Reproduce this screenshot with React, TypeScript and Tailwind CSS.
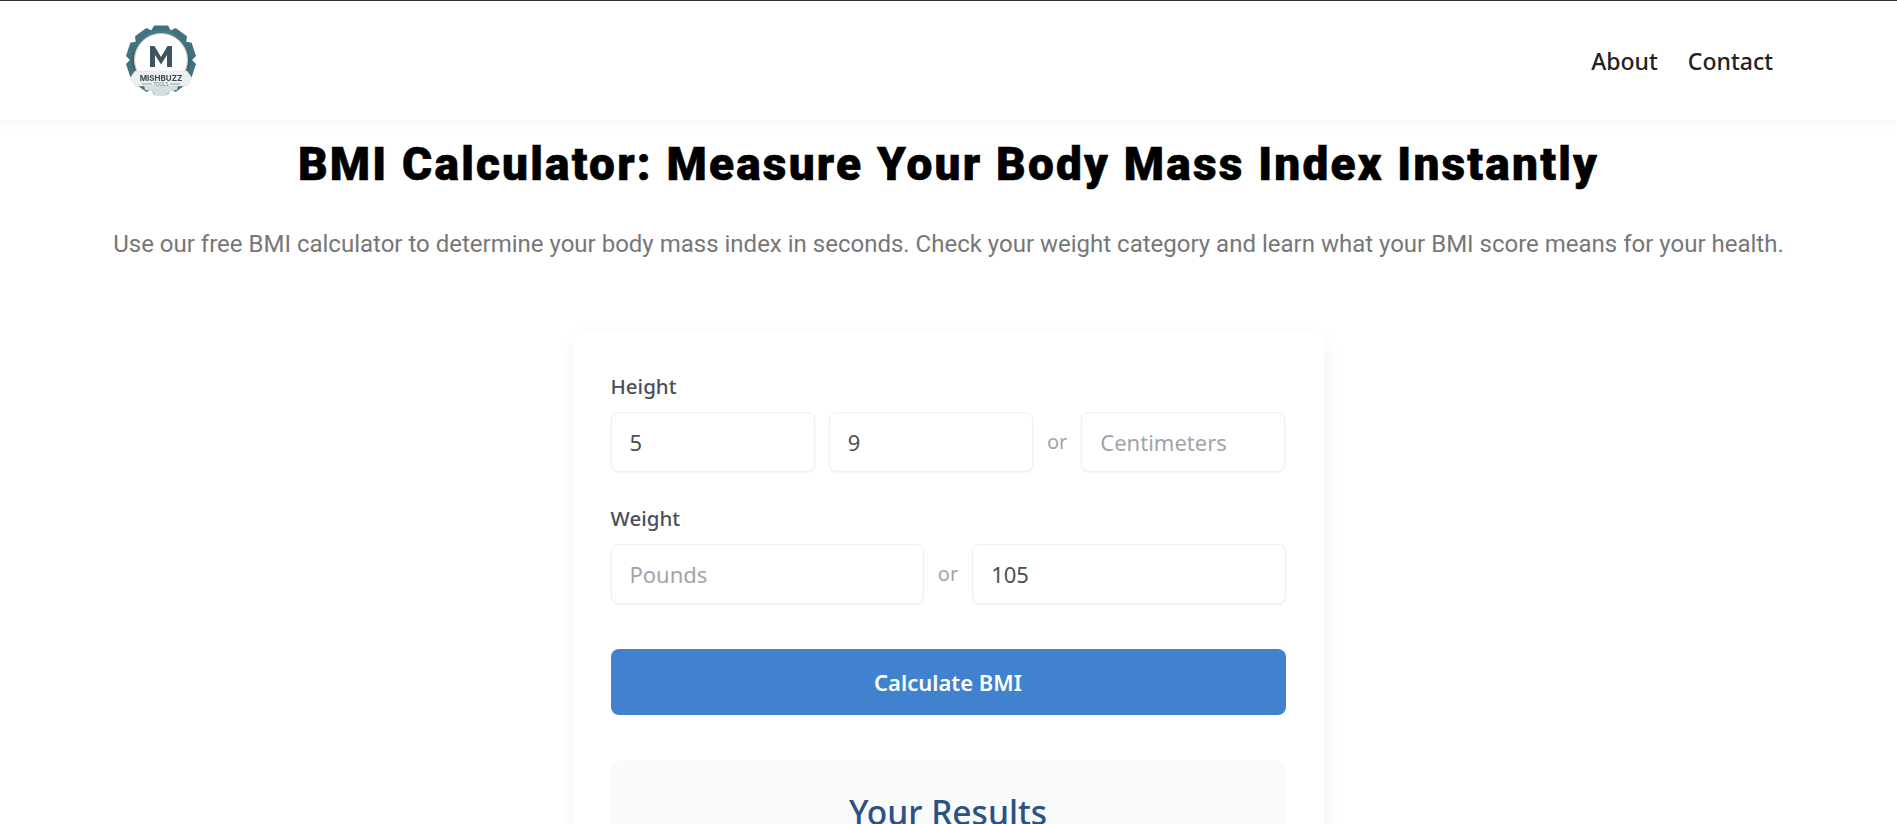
function Logo() {
  const teeth = Array.from({ length: 10 }, (_, i) => i * 36);
  return (
    <svg width="74" height="74" viewBox="0 0 74 74" aria-label="Mishbuzz Tools" className="mt-[3px] blur-[0.3px]">
      <defs>
        <linearGradient id="gear" x1="0" y1="0" x2="0" y2="1">
          <stop offset="0" stopColor="#42808f" />
          <stop offset="0.6" stopColor="#3d5f72" />
          <stop offset="1" stopColor="#5c7684" />
        </linearGradient>
      </defs>
      <circle cx="36" cy="35" r="31" fill="url(#gear)" />
      {teeth.map((a) => (
        <path key={a} d="M26 6l3-5.500h14l3 5.500z" fill="#42727f" transform={`rotate(${a} 36 35)`} />
      ))}
      <circle cx="36" cy="35" r="26.500" fill="#fff" stroke="#d9c8a8" strokeWidth="1" />
      <path d="M25 42V21h4.500L36 32l6.500-11H47v21h-5V30l-6 9.500L30 30v12z" fill="#3d5561" />
      <path d="M18 56h36l-2 9-7 1-4 5h-10l-4-5-7-1z" fill="#d6dde0" />
      <path d="M5 53l5-7h52l5 7-5 8H10z" fill="#edf0f1" stroke="#d3d9dc" strokeWidth="0.5" />
      <text x="36" y="56" textAnchor="middle" fontFamily="Inter, 'Liberation Sans', sans-serif" fontWeight="700" fontSize="8" fill="#3a4a55">MISHBUZZ</text>
      <path d="M17 59h10M45 59h10" stroke="#7d8c95" strokeWidth="0.8" />
      <text x="36" y="60.500" textAnchor="middle" fontFamily="'Liberation Sans', sans-serif" fontSize="4.500" fill="#66757e">TOOLS</text>
    </svg>
  );
}

function Field({ value, placeholder }: { value?: string; placeholder?: string }) {
  return (
    <input
      readOnly
      value={value ?? ""}
      placeholder={placeholder}
      className="h-[60px] w-full min-w-0 flex-1 rounded-lg border border-[#edf0f3] bg-white px-[18px] text-[22px] text-[#4b5057] shadow-[0_1px_2px_rgba(0,0,0,0.05)] outline-none placeholder:text-[#a0a4ab]"
    />
  );
}

function Or() {
  return <span className="text-[20px] text-[#a0a4ab]">or</span>;
}

export default function App() {
  return (
    <div className="h-[824px] overflow-hidden bg-white font-['Noto_Sans',sans-serif]">
      <header className="flex h-[120px] items-center justify-between border-t border-[#3a3230] bg-white pl-[125px] pr-[124px] shadow-[0_2px_12px_rgba(0,0,0,0.05)]">
        <Logo />
        <nav className="mt-[2px] flex gap-[30px] text-[23px] font-medium text-[#222222]">
          <a href="#about">About</a>
          <a href="#contact">Contact</a>
        </nav>
      </header>

      <main className="flex flex-col items-center">
        <h1 className="mt-[17px] font-['Roboto',sans-serif] text-[46px] leading-[54px] font-black tracking-[2.200px] text-black [-webkit-text-stroke:0.6px_black]">
          BMI Calculator: Measure Your Body Mass Index Instantly
        </h1>
        <p className="mt-[36px] font-['Roboto',sans-serif] text-[24px] leading-[34px] text-[#777777]">
          Use our free BMI calculator to determine your body mass index in seconds. Check your weight category and learn what your BMI score means for your health.
        </p>

        <section className="mt-[72px] w-[750px] rounded-xl bg-white pt-[39px] pr-[38px] pl-[37px] shadow-[0_4px_20px_rgba(0,0,0,0.06)]">
          <label className="block text-[20.500px] leading-[28px] font-medium text-[#4a4f5a]">Height</label>
          <div className="mt-[12px] flex items-center gap-[14px]">
            <Field value="5" />
            <Field value="9" />
            <Or />
            <Field placeholder="Centimeters" />
          </div>

          <label className="mt-[32px] block text-[20.500px] leading-[28px] font-medium text-[#4a4f5a]">Weight</label>
          <div className="mt-[12px] flex items-center gap-[14px]">
            <Field placeholder="Pounds" />
            <Or />
            <Field value="105" />
          </div>

          <button className="mt-[45px] h-[66px] w-full rounded-lg bg-[#4182ce] text-[22px] font-semibold text-white">
            Calculate BMI
          </button>

          <div className="mt-[45px] rounded-xl bg-[#f9fafc] pt-[30px] pb-[40px] text-center">
            <h2 className="text-[33.500px] leading-[44px] font-medium text-[#2c5282]">Your Results</h2>
          </div>
        </section>
      </main>
    </div>
  );
}
